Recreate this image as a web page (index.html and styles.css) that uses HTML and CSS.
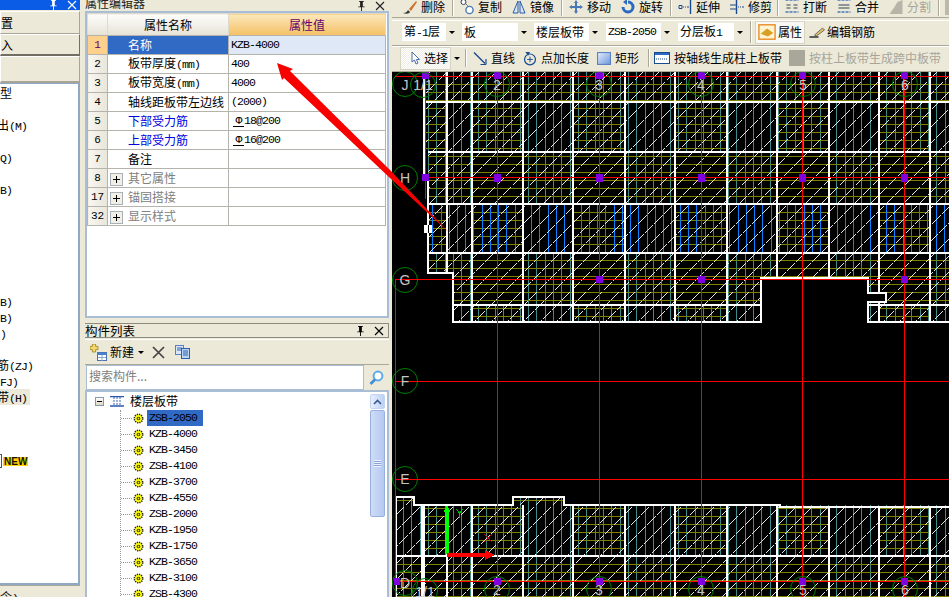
FILE: index.html
```html
<!DOCTYPE html>
<html lang="zh-CN">
<head>
<meta charset="utf-8">
<title>属性编辑器</title>
<link rel="stylesheet" href="styles.css">
</head>
<body>
<svg class="defs" width="0" height="0" aria-hidden="true">
  <defs>
    <symbol id="pin" viewBox="0 0 10 11"><path d="M3 0h5v1H7v5h2v1H6v4H5V7H2V6h2V1H3z" fill="currentColor"/></symbol>
    <symbol id="close" viewBox="0 0 10 10"><path d="M1 1l8 8M9 1l-8 8" stroke="currentColor" stroke-width="1.1" fill="none"/></symbol>
    <symbol id="gear" viewBox="0 0 12 12"><circle cx="6" cy="6" r="4.6" fill="#ff0" stroke="#222" stroke-width="1.6" stroke-dasharray="1.4 1"/><circle cx="6" cy="6" r="2" fill="#222"/><circle cx="6" cy="6" r="1" fill="#ff0"/></symbol>
    <symbol id="plus" viewBox="0 0 13 13"><rect x=".5" y=".5" width="12" height="12" fill="#f1efe6" stroke="#a8b0b8"/><path d="M3 6.5h7M6.5 3v7" stroke="#000"/></symbol>
  </defs>
</svg>

<div class="app">
  <aside class="left">
    <div class="left-title">
      <svg class="tb-icon"><use href="#pin"/></svg>
      <svg class="tb-icon"><use href="#close"/></svg>
    </div>
    <div class="nav-btn nav-a">置</div>
    <div class="nav-btn nav-b">入</div>
    <div class="nav-btn nav-c"></div>
    <ul class="nav-list">
      <li>型</li><li></li><li class="cut">出<span class="en">(M)</span></li><li></li>
      <li><span class="en">Q)</span></li><li></li><li><span class="en">B)</span></li><li></li>
      <li></li><li></li><li></li><li></li><li></li>
      <li><span class="en">B)</span></li><li><span class="en">B)</span></li><li><span class="en">)</span></li><li></li>
      <li class="cut">筋<span class="en">(ZJ)</span></li><li><span class="en">FJ)</span></li><li class="nav-on"><span class="cut-on">带</span><span class="en">(H)</span></li>
      <li></li><li></li><li></li>
      <li class="nav-new"><span class="new-box"></span><span class="new">NEW</span></li>
    </ul>
    <div class="left-foot">令<span class="en">)</span></div>
  </aside>

  <section class="mid">
    <header class="mid-title">
      <span class="mid-title-text">属性编辑器</span>
      <svg class="tb-icon"><use href="#pin"/></svg>
      <svg class="tb-icon"><use href="#close"/></svg>
    </header>
    <div class="prop-panel">
      <table class="prop">
        <colgroup><col class="c-n"><col class="c-k"><col class="c-v"></colgroup>
        <thead><tr class="prop-head"><th></th><th>属性名称</th><th class="head-val">属性值</th></tr></thead>
        <tbody>
          <tr class="sel"><td class="num">1</td><td class="k">名称</td><td class="v en">KZB-4000</td></tr>
          <tr><td class="num">2</td><td class="k">板带厚度<span class="en">(mm)</span></td><td class="v en">400</td></tr>
          <tr><td class="num">3</td><td class="k">板带宽度<span class="en">(mm)</span></td><td class="v en">4000</td></tr>
          <tr><td class="num">4</td><td class="k">轴线距板带左边线</td><td class="v en">(2000)</td></tr>
          <tr><td class="num">5</td><td class="k link">下部受力筋</td><td class="v en"><span class="rebar">Φ</span>18@200</td></tr>
          <tr><td class="num">6</td><td class="k link">上部受力筋</td><td class="v en"><span class="rebar">Φ</span>16@200</td></tr>
          <tr><td class="num">7</td><td class="k">备注</td><td class="v"></td></tr>
          <tr class="grp"><td class="num">8</td><td class="k"><svg class="exp"><use href="#plus"/></svg>其它属性</td><td class="v"></td></tr>
          <tr class="grp"><td class="num">17</td><td class="k"><svg class="exp"><use href="#plus"/></svg>锚固搭接</td><td class="v"></td></tr>
          <tr class="grp"><td class="num">32</td><td class="k"><svg class="exp"><use href="#plus"/></svg>显示样式</td><td class="v"></td></tr>
        </tbody>
      </table>
    </div>

    <header class="list-title">
      <span class="list-title-text">构件列表</span>
      <svg class="tb-icon"><use href="#pin"/></svg>
      <svg class="tb-icon"><use href="#close"/></svg>
    </header>
    <div class="list-tools">
      <svg class="lt-new" viewBox="0 0 17 17"><path d="M3 0h4v3h3v4H7v3H3V7H0V3h3z" fill="#f5d76e" stroke="#a08020" transform="scale(.8)"/><rect x="7.5" y="8.5" width="9" height="8" fill="#fff" stroke="#4a70b0"/><rect x="7.5" y="8.5" width="9" height="2.5" fill="#4a80d0"/><path d="M8 13.5h8M12 11v6" stroke="#8aa8d0"/></svg>
      <span class="lt-label">新建</span><span class="caret"></span>
      <svg class="lt-x" viewBox="0 0 13 13"><path d="M1 1l11 11M12 1L1 12" stroke="#444" stroke-width="1.7" fill="none"/></svg>
      <svg class="lt-copy" viewBox="0 0 15 14"><rect x=".5" y=".5" width="8" height="9" fill="#dbe8fa" stroke="#5a80c0"/><rect x="6.5" y="3.5" width="8" height="10" fill="#bcd4f4" stroke="#2a60b0"/><path d="M2 3h5M2 5h4M8 6h5M8 8h5M8 10h5" stroke="#2a60b0"/></svg>
    </div>
    <div class="search">
      <div class="search-input">搜索构件...</div>
      <div class="search-btn">
        <svg viewBox="0 0 15 15" width="15" height="15"><circle cx="9" cy="6" r="4.4" fill="#fff" stroke="#5aa9e8" stroke-width="2"/><path d="M6 9.5L1.5 14" stroke="#3d8fd8" stroke-width="2.6"/></svg>
      </div>
    </div>
    <div class="tree-wrap">
      <div class="tree">
        <div class="tree-root">
          <span class="minus"></span>
          <svg class="root-ic" viewBox="0 0 14 11"><path d="M0 .5h14M0 10h14" stroke="#2a55b0" stroke-width="1.4"/><path d="M4 1v8M7 1v8M10 1v8" stroke="#3a66b8" stroke-dasharray="2 1"/></svg>
          <span>楼层板带</span>
        </div>
        <ul class="tree-items">
          <li><svg class="gear"><use href="#gear"/></svg><span class="item-on en">ZSB-2050</span></li>
          <li><svg class="gear"><use href="#gear"/></svg><span class="en">KZB-4000</span></li>
          <li><svg class="gear"><use href="#gear"/></svg><span class="en">KZB-3450</span></li>
          <li><svg class="gear"><use href="#gear"/></svg><span class="en">ZSB-4100</span></li>
          <li><svg class="gear"><use href="#gear"/></svg><span class="en">KZB-3700</span></li>
          <li><svg class="gear"><use href="#gear"/></svg><span class="en">KZB-4550</span></li>
          <li><svg class="gear"><use href="#gear"/></svg><span class="en">ZSB-2000</span></li>
          <li><svg class="gear"><use href="#gear"/></svg><span class="en">KZB-1950</span></li>
          <li><svg class="gear"><use href="#gear"/></svg><span class="en">KZB-1750</span></li>
          <li><svg class="gear"><use href="#gear"/></svg><span class="en">KZB-3650</span></li>
          <li><svg class="gear"><use href="#gear"/></svg><span class="en">KZB-3100</span></li>
          <li><svg class="gear"><use href="#gear"/></svg><span class="en">ZSB-4300</span></li>
        </ul>
      </div>
      <div class="vscroll">
        <div class="vs-up"><svg viewBox="0 0 9 6" width="9" height="6"><path d="M1 5l3.5-3.5L8 5" stroke="#3a5a90" stroke-width="1.6" fill="none"/></svg></div>
        <div class="vs-thumb"><span class="vs-grip"></span></div>
      </div>
    </div>
  </section>

  <main class="right">
    <div class="bar bar1">
      <div class="tool"><svg class="ic" viewBox="0 0 16 16"><path d="M1 14c3 0 4-1 5-3l2 2c-1 2-4 2-7 1z" fill="#333"/><path d="M7 10l7-8 1 1-6 9z" fill="#d07030"/></svg><span>删除</span></div>
      <i class="sep"></i>
      <div class="tool"><svg class="ic" viewBox="0 0 14 16"><circle cx="3.5" cy="3" r="2.5" fill="#fff" stroke="#345"/><circle cx="9.5" cy="11" r="3.6" fill="#fff" stroke="#4a78b8" stroke-width="1.4"/><path d="M6 5l2 2" stroke="#345" stroke-dasharray="1 1"/></svg><span>复制</span></div>
      <div class="tool"><svg class="ic" viewBox="0 0 14 16"><path d="M6 2L1 14h5zM8 2l5 12H8z" fill="#dce8f8" stroke="#2a5aa8"/></svg><span>镜像</span></div>
      <i class="sep"></i>
      <div class="tool"><svg class="ic" viewBox="0 0 14 16"><path d="M7 1l2 3H8v3h3V6l3 2-3 2V9H8v3h1l-2 3-2-3h1V9H3v1L0 8l3-2v1h3V4H5z" fill="#4a78b8"/></svg><span>移动</span></div>
      <div class="tool"><svg class="ic" viewBox="0 0 14 16"><path d="M7 3a5 5 0 1 1-5 5" stroke="#2a6ac0" stroke-width="3" fill="none"/><path d="M6 0v6L2 3z" fill="#2a6ac0"/></svg><span>旋转</span></div>
      <i class="sep"></i>
      <div class="tool"><svg class="ic" viewBox="0 0 14 16"><path d="M12.5 1v14" stroke="#1a4a90" stroke-width="1.4"/><path d="M1 6.5h3v3H1zM5 8h1M7 8h1M9 8h2" stroke="#1a4a90" fill="none"/></svg><span>延伸</span></div>
      <div class="tool"><svg class="ic" viewBox="0 0 14 16"><path d="M6.5 1v14" stroke="#1a4a90" stroke-width="1.4"/><path d="M0 6h6M0 10h6M8 8h1M10 8h1M12 8h2" stroke="#1a4a90" fill="none"/></svg><span>修剪</span></div>
      <i class="sep sep-tight"></i>
      <div class="tool"><svg class="ic" viewBox="0 0 15 16"><path d="M1 1h13M1 13h13" stroke="#4a78b8" stroke-dasharray="3 1" stroke-width="1.4"/><path d="M2 6h4M13 6H9M2 9h4M13 9H9" stroke="#345"/></svg><span>打断</span></div>
      <div class="tool"><svg class="ic" viewBox="0 0 15 16"><path d="M1 1h13M1 13h13" stroke="#4a78b8" stroke-dasharray="3 1" stroke-width="1.4"/><path d="M2 6h11M2 9h11" stroke="#345"/></svg><span>合并</span></div>
      <div class="tool off"><svg class="ic" viewBox="0 0 15 16"><path d="M1 15l5-7 3-5 5-2v14z" fill="#b8b5a8"/></svg><span>分割</span></div>
      <i class="sep"></i>
      <div class="tool-end"></div>
    </div>

    <div class="bar bar2">
      <div class="combo c-floor"><span>第<span class="en">-1</span>层</span><b></b></div>
      <div class="combo c-type"><span>板</span><b></b></div>
      <div class="combo c-sub"><span>楼层板带</span><b></b></div>
      <div class="combo c-name"><span class="en">ZSB-2050</span><b></b></div>
      <div class="combo c-layer"><span>分层板<span class="en">1</span></span><b></b></div>
      <i class="sep sep-wide"></i>
      <div class="btn-on"><svg class="ic-prop" viewBox="0 0 20 20"><rect x="1" y="2" width="18" height="16" fill="#fff3d0" stroke="#e88a20" stroke-width="1.5"/><path d="M3 12l7-6 7 5-6 4z" fill="#d8a020"/></svg><span>属性</span></div>
      <div class="tool tool-rebar"><svg class="ic-edit" viewBox="0 0 16 14"><path d="M0 12h9" stroke="#222" stroke-width="1.4"/><path d="M5 10l8-7 2 2-8 6z" fill="#e0c070" stroke="#444" stroke-width=".7"/></svg><span>编辑钢筋</span></div>
    </div>

    <div class="bar bar3">
      <div class="btn-sel"><svg class="ic-arrow" viewBox="0 0 9 14"><path d="M1 1v10l2.5-2L5 13l2-1-1.600-3.500H8.500z" fill="#fff" stroke="#4a6ea8"/></svg><span>选择</span></div><span class="caret caret-sel"></span>
      <i class="sep"></i>
      <div class="tool"><svg class="ic" viewBox="0 0 14 14"><path d="M1 1l11 11" stroke="#1a4a90" stroke-width="1.4"/><path d="M13 13H7.500M13 13V7.500" stroke="#1a4a90" stroke-width="1.2"/></svg><span>直线</span></div>
      <div class="tool"><svg class="ic" viewBox="0 0 14 16"><circle cx="7" cy="9" r="5.800" fill="none" stroke="#1a4a90" stroke-width="1.3"/><path d="M7 6v6M4 9h6" stroke="#1a4a90"/><path d="M2 1h5l-2 4z" fill="#1a4a90"/></svg><span>点加长度</span></div>
      <div class="tool"><svg class="ic" viewBox="0 0 13 12"><defs><linearGradient id="rg" x1="0" y1="0" x2="1" y2="1"><stop offset="0" stop-color="#e6eefc"/><stop offset="1" stop-color="#6c96dc"/></linearGradient></defs><rect x=".5" y=".5" width="12" height="11" fill="url(#rg)" stroke="#5a80c0"/></svg><span>矩形</span></div>
      <i class="sep"></i>
      <div class="tool wide"><svg class="ic-axis" viewBox="0 0 16 14"><rect x=".5" y="1.500" width="15" height="11" fill="#fff" stroke="#1a4a90"/><rect x="1" y="2" width="14" height="2" fill="#2a6ac0"/><path d="M2 8h12" stroke="#1a4a90" stroke-dasharray="1 1"/></svg><span>按轴线生成柱上板带</span></div>
      <div class="tool off"><i class="grey-box"></i><span>按柱上板带生成跨中板带</span></div>
    </div>

    <svg class="cad" viewBox="392 72 557 525" width="557" height="525" shape-rendering="crispEdges">
      <defs>
        <clipPath id="clip-teal"><path d="M424 72H949V152H424zM453 305H949V322H453zM428 152h44v52h-44zM523 152h50v52h-50zM625 152h50v52h-50zM727 152h50v52h-50zM829 152h50v52h-50zM930 152h19v52h-19zM428 253h44v52h-44zM523 253h50v52h-50zM625 253h50v52h-50zM727 253h50v52h-50zM829 253h50v52h-50zM930 253h19v52h-19zM396 497h18v100h-18zM414 505H949V556H414zM447 556h25v41h-25zM523 556h50v41h-50zM625 556h50v41h-50zM727 556h50v41h-50zM829 556h50v41h-50zM930 556h19v41h-19zM513 497h51v8h-51z"/></clipPath>
        <clipPath id="clip-olive"><path d="M424 72H949V102H424zM428 152H949V204H428zM428 253H949V305H428zM424 102h23v50h-23zM472 102h51v50h-51zM573 102h52v50h-52zM675 102h52v50h-52zM777 102h52v50h-52zM879 102h51v50h-51zM428 204h19v49h-19zM472 204h51v49h-51zM573 204h52v49h-52zM675 204h52v49h-52zM777 204h52v49h-52zM879 204h51v49h-51zM472 305h51v17h-51zM573 305h52v17h-52zM675 305h52v17h-52zM777 305h52v17h-52zM879 305h51v17h-51zM396 497h18v8h-18zM513 497h51v8h-51zM424 505h23v51h-23zM472 505h51v51h-51zM573 505h52v51h-52zM675 505h52v51h-52zM777 505h52v51h-52zM879 505h51v51h-51zM396 556H949V597H396z"/></clipPath>
        <clipPath id="clip-blue"><path d="M428 204H949V253H428z"/></clipPath>
        <clipPath id="clip-diag"><path d="M424 72H949V322H868V278H761V322H453V273H428V152H424zM396 497h18v8h99v-8h51v8H949V597H396z"/></clipPath>
      </defs>

      <rect x="392" y="72" width="557" height="525" fill="#000"/>

      <!-- hatching -->
      <g clip-path="url(#clip-teal)" fill="none">
        <path stroke="#3f8a8a" transform="translate(.5)" d="M403 72V597M411 72V597M420 72V597M428 72V597M436 72V597M445 72V597M453 72V597M461 72V597M470 72V597M478 72V597M486 72V597M495 72V597M503 72V597M511 72V597M520 72V597M528 72V597M536 72V597M545 72V597M553 72V597M561 72V597M570 72V597M578 72V597M586 72V597M595 72V597M603 72V597M611 72V597M620 72V597M628 72V597M636 72V597M645 72V597M653 72V597M661 72V597M670 72V597M678 72V597M686 72V597M695 72V597M703 72V597M711 72V597M720 72V597M728 72V597M736 72V597M745 72V597M753 72V597M761 72V597M770 72V597M778 72V597M786 72V597M795 72V597M803 72V597M811 72V597M820 72V597M828 72V597M836 72V597M845 72V597M853 72V597M861 72V597M870 72V597M878 72V597M886 72V597M895 72V597M903 72V597M911 72V597M920 72V597M928 72V597M936 72V597M945 72V597"/>
      </g>
      <g clip-path="url(#clip-olive)" fill="none">
        <path stroke="#808000" transform="translate(0 .5)" d="M392 76h557M392 84h557M392 92h557M392 100h557M392 108h557M392 116h557M392 124h557M392 132h557M392 140h557M392 148h557M392 156h557M392 164h557M392 172h557M392 180h557M392 188h557M392 196h557M392 204h557M392 212h557M392 220h557M392 228h557M392 236h557M392 244h557M392 252h557M392 260h557M392 268h557M392 276h557M392 284h557M392 292h557M392 300h557M392 308h557M392 316h557M392 500h557M392 508h557M392 516h557M392 524h557M392 532h557M392 540h557M392 548h557M392 556h557M392 564h557M392 572h557M392 580h557M392 588h557M392 596h557"/>
      </g>
      <g clip-path="url(#clip-blue)" fill="none">
        <path stroke="#0a80ff" transform="translate(.5)" d="M432 204v49M441 204v49M449 204v49M457 204v49M465 204v49M473 204v49M482 204v49M490 204v49M498 204v49M506 204v49M515 204v49M523 204v49M531 204v49M539 204v49M548 204v49M556 204v49M564 204v49M572 204v49M581 204v49M589 204v49M597 204v49M605 204v49M614 204v49M622 204v49M630 204v49M638 204v49M647 204v49M655 204v49M663 204v49M671 204v49M680 204v49M688 204v49M696 204v49M705 204v49M713 204v49M721 204v49M729 204v49M738 204v49M746 204v49M754 204v49M762 204v49M771 204v49M779 204v49M787 204v49M795 204v49M804 204v49M812 204v49M820 204v49M828 204v49M837 204v49M845 204v49M853 204v49M861 204v49M870 204v49M878 204v49M886 204v49M894 204v49M903 204v49M911 204v49M919 204v49M927 204v49M936 204v49M944 204v49"/>
      </g>
      <g clip-path="url(#clip-diag)" fill="none" stroke="#e4e4e4" stroke-dasharray="12 1.500">
        <path d="M414 72l-250 250M430 72l-250 250M447 72l-250 250M463 72l-250 250M479 72l-250 250M496 72l-250 250M512 72l-250 250M528 72l-250 250M545 72l-250 250M561 72l-250 250M577 72l-250 250M594 72l-250 250M610 72l-250 250M626 72l-250 250M643 72l-250 250M659 72l-250 250M675 72l-250 250M692 72l-250 250M708 72l-250 250M724 72l-250 250M741 72l-250 250M757 72l-250 250M773 72l-250 250M790 72l-250 250M806 72l-250 250M822 72l-250 250M839 72l-250 250M855 72l-250 250M871 72l-250 250M888 72l-250 250M904 72l-250 250M920 72l-250 250M937 72l-250 250M953 72l-250 250M969 72l-250 250M986 72l-250 250M1002 72l-250 250M1018 72l-250 250M1035 72l-250 250M1051 72l-250 250M1067 72l-250 250M1084 72l-250 250M1100 72l-250 250M1116 72l-250 250M1133 72l-250 250M1149 72l-250 250M1165 72l-250 250M1182 72l-250 250M1198 72l-250 250"/>
        <path d="M397 497l-100 100M414 497l-100 100M430 497l-100 100M446 497l-100 100M463 497l-100 100M479 497l-100 100M495 497l-100 100M512 497l-100 100M528 497l-100 100M544 497l-100 100M561 497l-100 100M577 497l-100 100M593 497l-100 100M610 497l-100 100M626 497l-100 100M642 497l-100 100M659 497l-100 100M675 497l-100 100M691 497l-100 100M708 497l-100 100M724 497l-100 100M740 497l-100 100M757 497l-100 100M773 497l-100 100M789 497l-100 100M806 497l-100 100M822 497l-100 100M838 497l-100 100M855 497l-100 100M871 497l-100 100M887 497l-100 100M904 497l-100 100M920 497l-100 100M936 497l-100 100M953 497l-100 100M969 497l-100 100M985 497l-100 100M1002 497l-100 100M1018 497l-100 100M1034 497l-100 100"/>
      </g>
      <!-- openings in the slab -->
      <path d="M428 273h25v49h-25zM761 278h107v44H761zM868 293h18v9h-18z" fill="#000"/>

      <!-- slab outlines -->
      <g stroke="#fff" stroke-width="2" fill="none">
        <path d="M424 72V102M424 102H949M428 152H949M428 204H949M428 253H949M453 305H761M868 305H949"/>
        <path d="M424 102V178H428V273H453V322H761V278H868V293H886V302H868V322H949"/>
        <path d="M447 72V273M472 72V322M523 72V322M573 72V322M625 72V322M675 72V322M727 72V322M777 72V278M829 72V278M879 72V293M879 302V322M930 72V322"/>
        <path d="M396 597V497H414V505H513V497H564V505H780V507H949"/>
        <path d="M396 556H949"/>
        <path d="M422 505V597M424 505V597M447 505V597M472 505V597M523 505V597M573 505V597M625 505V597M675 505V597M727 505V597M777 505V597M829 507V597M879 507V597M930 507V597"/>
      </g>
      <path d="M424 225h8v8h-8z" fill="#fff"/>
      <path d="M428 225h1v8h-1z" fill="#000"/>

      <!-- axis lines -->
      <g stroke="#f00" stroke-width="1" fill="none">
        <path d="M497.500 72V597M599.500 72V597M701.500 72V597M802.500 72V597M904.500 72V597"/>
        <path d="M425.500 72V199M395.500 279V597"/>
        <path d="M395 76.500H949M425 177.500H949M395 279.500H949M395 381.500H949M395 479.500H949M396 581.500H949"/>
      </g>

      <!-- column markers -->
      <g fill="#8000e0">
        <path d="M494 72h7v7h-7zM596 72h7v7h-7zM698 72h7v7h-7zM799 72h7v7h-7zM901 72h7v7h-7zM422 72h7v7h-7z"/>
        <path d="M494 174h7v8h-7zM596 174h7v8h-7zM698 174h7v8h-7zM799 174h7v8h-7zM901 174h7v8h-7zM422 174h7v7h-7z"/>
        <path d="M596 276h7v7h-7zM698 276h7v7h-7zM901 276h7v7h-7z"/>
        <path d="M494 578h7v7h-7zM596 578h7v7h-7zM698 578h7v7h-7zM799 578h7v7h-7zM901 578h7v7h-7zM394 578h6v7h-6z"/>
      </g>

      <!-- axis bubbles -->
      <g fill="none" stroke="#008000" stroke-width="1" shape-rendering="auto">
        <circle cx="405" cy="84" r="12.500"/><circle cx="423" cy="85" r="12.500"/><circle cx="497" cy="84" r="12.500"/><circle cx="599" cy="84" r="12.500"/><circle cx="701" cy="84" r="12.500"/><circle cx="803" cy="84" r="12.500"/><circle cx="905" cy="84" r="12.500"/>
        <circle cx="405" cy="178" r="12.500"/><circle cx="405" cy="280" r="12.500"/><circle cx="405" cy="381" r="12.500"/><circle cx="405" cy="479" r="12.500"/><circle cx="405" cy="583" r="12.500"/>
        <circle cx="425" cy="591" r="12.500"/><circle cx="497" cy="589" r="12.500"/><circle cx="599" cy="589" r="12.500"/><circle cx="701" cy="589" r="12.500"/><circle cx="803" cy="589" r="12.500"/><circle cx="905" cy="589" r="12.500"/>
      </g>
      <g class="cad-text" text-anchor="middle">
        <text x="405" y="90">J</text><text x="423" y="90">1/1</text><text x="497" y="90">2</text><text x="599" y="90">3</text><text x="701" y="90">4</text><text x="803" y="90">5</text><text x="905" y="90">6</text>
        <text x="405" y="183">H</text><text x="405" y="285">G</text><text x="405" y="386">F</text><text x="405" y="484">E</text><text x="405" y="588">D</text>
        <text x="425" y="597">1/1</text><text x="497" y="595">2</text><text x="599" y="595">3</text><text x="701" y="595">4</text><text x="803" y="595">5</text><text x="905" y="595">6</text>
      </g>

      <!-- UCS marker -->
      <path d="M445 511h4v43h-4zM447 505l3.500 7h-7z" fill="#00ff00"/>
      <path d="M447 553h39v4h-39zM485 550l10 5-10 5z" fill="#f00"/>
      <path d="M456 509l3.500 4 3.500-4M459.500 513v5" stroke="#00c000" fill="none"/>
      <path d="M484 534l8 8M492 534l-8 8" stroke="#c00000" fill="none"/>
    </svg>
  </main>

  <svg class="callout" viewBox="0 0 949 597" width="949" height="597" aria-hidden="true">
    <path d="M277 63L293 69 290 71 390 170 449 232.500 390 178 284 78 282 80z" fill="#f80000"/>
  </svg>
</div>
</body>
</html>
```

FILE: styles.css
```css
* { box-sizing: border-box; }
html, body { margin: 0; padding: 0; }
body { background: #ece9d8; color: #000; font: 12px/16px "Noto Sans CJK SC", "Liberation Sans", sans-serif; }
ul { list-style: none; margin: 0; padding: 0; }
.defs { position: absolute; }
.en { font-family: "Liberation Mono", monospace; font-size: 11.5px; letter-spacing: -.9px; }

.app { position: relative; display: flex; width: 949px; height: 597px; overflow: hidden; background: #ece9d8; }
.callout { position: absolute; left: 0; top: 0; pointer-events: none; }
.tb-icon { width: 10px; height: 10px; flex: none; }

/* left dock */
.left { width: 80px; flex: none; display: flex; flex-direction: column; }
.left-title { height: 10px; background: #0a5ce6; color: #fff; display: flex; justify-content: flex-end; align-items: center; gap: 9px; padding-right: 3px; overflow: hidden; }
.nav-btn { background: #ece9d8; border: 1px solid #fff; border-right-color: #a8a596; border-bottom-color: #a8a596; font-size: 12px; display: flex; align-items: center; }
.nav-a { height: 23px; margin-top: 1px; }
.nav-b { height: 22px; border-right-color: #716f64; border-bottom: 2px solid #716f64; }
.nav-c { height: 27px; border-bottom: 2px solid #a8a596; }
.nav-list { flex: 1; background: #fff; border: 1px solid #8fa8c4; border-width: 1px 2px 2px 0; padding-top: 1px; }
.nav-list li { height: 16px; line-height: 15px; white-space: nowrap; overflow: hidden; }
.nav-list .cut { text-indent: -3px; }
.nav-list .nav-on { background: #ece9d8; width: 30px; text-indent: -3px; }
.nav-list .nav-new { display: flex; align-items: center; overflow: visible; }
.new-box { width: 2px; height: 14px; border: 1px solid #555; border-left: 0; }
.new { margin-left: 1px; font: bold 10px/9px "Liberation Sans", sans-serif; color: #111; background: #ffd400; padding: 0 1px; }
.left-foot { height: 12px; border-top: 1px solid #aca899; line-height: 22px; overflow: hidden; }

/* middle dock */
.mid { width: 304px; flex: none; margin-left: 5px; display: flex; flex-direction: column; }
.mid-title { height: 11px; flex: none; display: flex; align-items: center; gap: 9px; padding-right: 4px; color: #222; overflow: hidden; }
.mid-title-text { flex: 1; line-height: 10px; font-size: 12px; margin-top: -6px; white-space: nowrap; }
.prop-panel { height: 307px; flex: none; background: #fff; border: 2px solid #a9bdd4; }
.prop { border-collapse: collapse; table-layout: fixed; width: 298px; }
.c-n { width: 20px; } .c-k { width: 121px; } .c-v { width: 157px; }
.prop th, .prop td { border: 1px solid #b4b4ac; padding: 0; height: 19px; line-height: 14px; overflow: hidden; white-space: nowrap; font-weight: 400; }
.prop-head th { height: 22px; font-size: 12px; background: linear-gradient(#fdfdfb, #e6e2d6); border-color: #ddd9cc; border-bottom-color: #b4b4ac; }
.prop-head .head-val { background: linear-gradient(#fbe8bc, #f4c064); color: #660066; }
.num { text-align: center; background: linear-gradient(90deg, #f8f7f1, #e8e5d9); font-family: "Liberation Mono", monospace; font-size: 11px; }
.prop .k { padding-left: 20px; }
.prop .v { padding-left: 2px; }
.sel .num { background: #fdd08c; color: #660066; }
.sel .k { background: #316ac5; color: #fff; }
.sel .v { background: #dfe8f6; }
.link { color: #0000e0; }
.prop .grp .k { color: #808080; padding-left: 2px; }
.exp { width: 13px; height: 13px; margin-right: 5px; vertical-align: -3px; }
.rebar { display: inline-block; width: 11px; margin-left: 2px; border-bottom: 1px solid #000; line-height: 10px; text-align: center; }

.list-title { height: 15px; flex: none; margin-top: 5px; display: flex; align-items: center; gap: 9px; padding-right: 4px; border: 1px solid #8d8b80; border-width: 1px 1px 1px 0; }
.list-title-text { flex: 1; font-size: 12.500px; line-height: 13px; white-space: nowrap; }
.list-tools { height: 26px; flex: none; margin-top: 1px; display: flex; align-items: center; padding-left: 5px; border-top: 1px solid #fff; border-bottom: 1px solid #aca899; }
.lt-new { width: 17px; height: 17px; }
.lt-label { margin-left: 3px; font-size: 12px; }
.caret { width: 0; height: 0; border: 3px solid transparent; border-top: 3px solid #000; border-bottom: 0; margin-left: 4px; }
.lt-x { width: 13px; height: 13px; margin-left: 8px; }
.lt-copy { width: 15px; height: 14px; margin-left: 10px; }
.search { height: 25px; flex: none; display: flex; }
.search-input { width: 278px; margin-left: 1px; background: #fff; border: 1px solid #a9bdd4; color: #808080; padding-left: 2px; line-height: 20px; }
.search-btn { flex: 1; display: flex; align-items: center; justify-content: center; }
.tree-wrap { flex: 1; display: flex; background: #fff; border: 1px solid #a9bdd4; border-width: 2px 2px 0 2px; overflow: hidden; min-height: 0; }
.tree { flex: 1; overflow: hidden; padding-left: 8px; }
.tree-root { height: 16px; margin: 1px 0 1px; display: flex; align-items: center; }
.minus { width: 9px; height: 9px; border: 1px solid #8a98a8; background: linear-gradient(#fff, #dcd8c8); position: relative; margin-top: 1px; }
.minus::after { content: ""; position: absolute; left: 1px; top: 3px; width: 5px; height: 1px; background: #000; }
.root-ic { width: 14px; height: 11px; margin: 0 6px; }
.tree-items { margin-left: 25px; border-left: 1px dotted #999; }
.tree-items li { height: 16px; display: flex; align-items: center; position: relative; padding-left: 12px; }
.tree-items li::before { content: ""; position: absolute; left: 0; top: 8px; width: 11px; border-top: 1px dotted #999; }
.gear { width: 11px; height: 11px; flex: none; }
.tree-items .en { margin-left: 3px; padding: 0 2px; line-height: 16px; }
.tree-items .item-on { background: #316ac5; color: #000; padding: 0 6px 0 2px; }
.vscroll { width: 15px; flex: none; margin-right: 2px; display: flex; flex-direction: column; gap: 1px; padding-top: 2px; }
.vs-up { height: 15px; display: flex; align-items: center; justify-content: center; background: linear-gradient(90deg, #e6eefc, #bcd0f4); border: 1px solid #c4d4f0; border-radius: 2px; }
.vs-thumb { height: 107px; display: flex; align-items: center; justify-content: center; background: linear-gradient(90deg, #cfdcf6, #b4c8f2); border: 1px solid #98b0e0; border-radius: 2px; }
.vs-grip { width: 7px; height: 7px; background: repeating-linear-gradient(#eef3fd 0 1px, #8aa4d8 1px 2px); }

/* main area */
.right { width: 557px; flex: none; margin-left: 3px; display: flex; flex-direction: column; }
.bar { display: flex; align-items: center; flex: none; border-bottom: 1px solid #aca899; font-size: 12px; white-space: nowrap; overflow: hidden; }
.bar1 { height: 18px; padding: 0 0 4px 10px; gap: 8px; }
.bar2 { height: 26px; margin-top: 2px; padding: 0 0 2px 10px; border-top: 1px solid #fff; }
.bar3 { height: 26px; padding: 0 0 2px 8px; border-top: 1px solid #fff; }
.sep { width: 2px; height: 18px; flex: none; border-left: 1px solid #aca899; border-right: 1px solid #fff; margin: 0 -3px 0 -2px; }
.sep-tight { margin-left: -4px; }
.tool { display: flex; align-items: center; width: 44px; flex: none; gap: 3px; }
.ic { width: 16px; height: 16px; flex: none; }
.tool.off { color: #a8a598; }
.tool-end { width: 20px; height: 16px; background: #bcb9aa; flex: none; margin-left: 0; }

.combo { display: flex; align-items: center; justify-content: space-between; height: 18px; background: #fff; padding-left: 2px; flex: none; }
.combo b { width: 12px; height: 18px; flex: none; background: #ece9d8; position: relative; }
.combo b::after { content: ""; position: absolute; left: 3px; top: 8px; border: 3px solid transparent; border-top: 3px solid #000; border-bottom: 0; }
.c-floor { width: 56px; margin-right: 4px; } .c-type { width: 68px; margin-right: 4px; } .c-sub { width: 67px; margin-right: 5px; } .c-name { width: 67px; margin-right: 5px; } .c-layer { width: 68px; }
.bar2 .sep-wide { margin: 0 3px 0 4px; height: 22px; }
.btn-on { display: flex; align-items: center; gap: 2px; width: 50px; height: 23px; padding-left: 2px; background: #f8f8f4; border: 1px solid #d8d4c4; flex: none; }
.ic-prop { width: 18px; height: 18px; flex: none; }
.bar2 .tool-rebar { width: auto; margin-left: 4px; gap: 1px; }
.ic-edit { width: 17px; height: 14px; flex: none; }

.btn-sel { display: flex; align-items: center; width: 51px; height: 23px; padding-left: 10px; gap: 4px; flex: none; background: repeating-conic-gradient(#fff 0 25%, #f0eee4 0 50%) 0 0/2px 2px; border: 1px solid #d8d4c4; }
.ic-arrow { width: 9px; height: 14px; flex: none; }
.caret-sel { margin: 0 5px 0 3px; flex: none; }
.bar3 .sep { margin: 0 6px 0 0; }
.bar3 .tool { width: auto; gap: 4px; margin-right: 8px; }
.bar3 .tool + .sep { margin: 0 4px 0 1px; }
.bar3 .ic { width: 14px; height: 15px; }
.bar3 .wide { margin-right: 7px; }
.ic-axis { width: 16px; height: 14px; flex: none; }
.grey-box { width: 16px; height: 16px; background: #a9a79a; flex: none; }

.cad { display: block; flex: none; }
.cad-text { font: 14px "Liberation Sans", sans-serif; fill: #c4c4c4; }
```
